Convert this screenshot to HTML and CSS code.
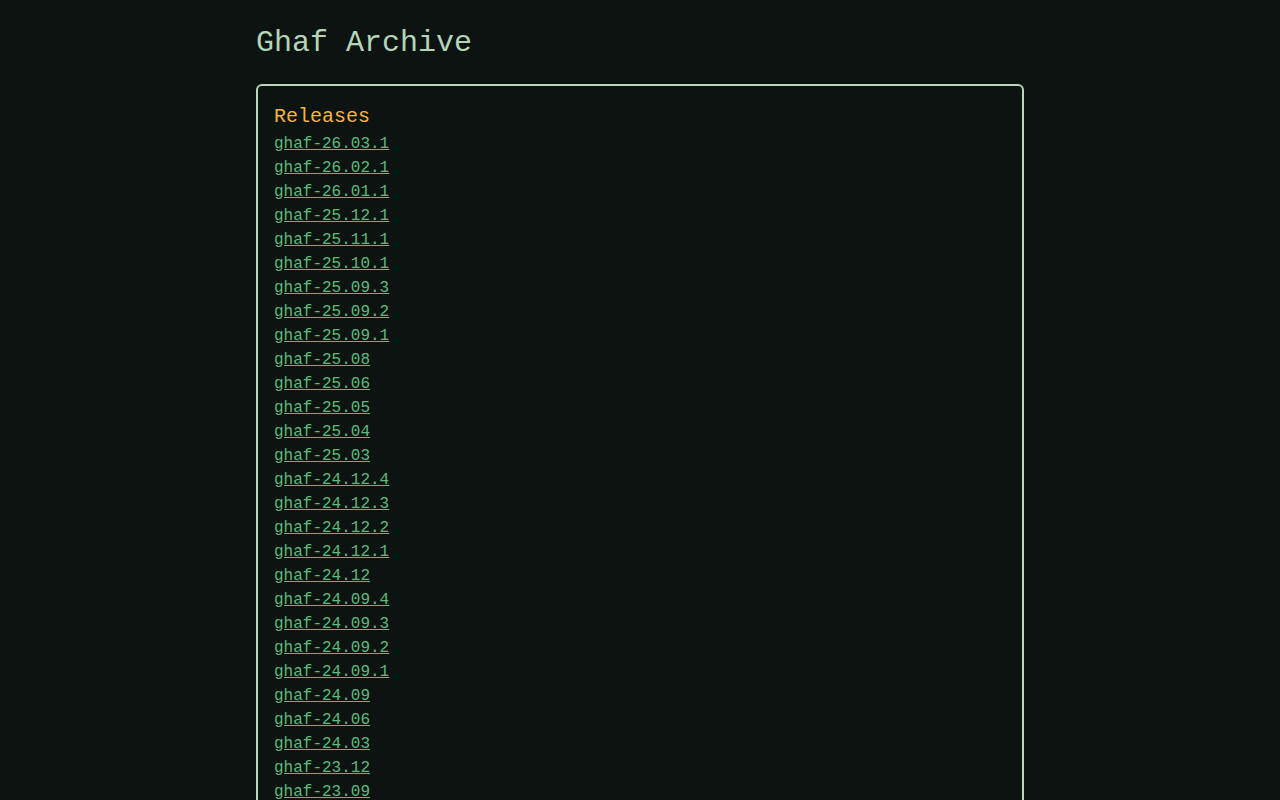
FILE: index.html
```html
<!DOCTYPE html>
<html lang="en">
<head>
<meta charset="UTF-8">
<meta name="viewport" content="width=device-width, initial-scale=1.0">
<title>Ghaf Archive</title>
<link rel="stylesheet" href="styles.css">
</head>
<body>
<div class="container">
    <h1>Ghaf Archive</h1>
    <div class="section">
        <h2>Releases</h2>
        <ul class="release-list">
            <li><a href="ghaf-26.03.1/">ghaf-26.03.1</a></li>
            <li><a href="ghaf-26.02.1/">ghaf-26.02.1</a></li>
            <li><a href="ghaf-26.01.1/">ghaf-26.01.1</a></li>
            <li><a href="ghaf-25.12.1/">ghaf-25.12.1</a></li>
            <li><a href="ghaf-25.11.1/">ghaf-25.11.1</a></li>
            <li><a href="ghaf-25.10.1/">ghaf-25.10.1</a></li>
            <li><a href="ghaf-25.09.3/">ghaf-25.09.3</a></li>
            <li><a href="ghaf-25.09.2/">ghaf-25.09.2</a></li>
            <li><a href="ghaf-25.09.1/">ghaf-25.09.1</a></li>
            <li><a href="ghaf-25.08/">ghaf-25.08</a></li>
            <li><a href="ghaf-25.06/">ghaf-25.06</a></li>
            <li><a href="ghaf-25.05/">ghaf-25.05</a></li>
            <li><a href="ghaf-25.04/">ghaf-25.04</a></li>
            <li><a href="ghaf-25.03/">ghaf-25.03</a></li>
            <li><a href="ghaf-24.12.4/">ghaf-24.12.4</a></li>
            <li><a href="ghaf-24.12.3/">ghaf-24.12.3</a></li>
            <li><a href="ghaf-24.12.2/">ghaf-24.12.2</a></li>
            <li><a href="ghaf-24.12.1/">ghaf-24.12.1</a></li>
            <li><a href="ghaf-24.12/">ghaf-24.12</a></li>
            <li><a href="ghaf-24.09.4/">ghaf-24.09.4</a></li>
            <li><a href="ghaf-24.09.3/">ghaf-24.09.3</a></li>
            <li><a href="ghaf-24.09.2/">ghaf-24.09.2</a></li>
            <li><a href="ghaf-24.09.1/">ghaf-24.09.1</a></li>
            <li><a href="ghaf-24.09/">ghaf-24.09</a></li>
            <li><a href="ghaf-24.06/">ghaf-24.06</a></li>
            <li><a href="ghaf-24.03/">ghaf-24.03</a></li>
            <li><a href="ghaf-23.12/">ghaf-23.12</a></li>
            <li><a href="ghaf-23.09/">ghaf-23.09</a></li>
            <li><a href="ghaf-23.06/">ghaf-23.06</a></li>
            <li><a href="ghaf-23.05/">ghaf-23.05</a></li>
        </ul>
    </div>
</div>
</body>
</html>
```

FILE: styles.css
```css
body {
    font-family: 'Liberation Mono', 'DejaVu Sans Mono', monospace;
    margin: 0;
    padding: 0;
    background-color: #0d1311;
    color: #b5d5b8;
}

.container {
    width: 768px;
    margin: 0 auto;
    padding-top: 21px;
}

h1 {
    font-size: 30px;
    font-weight: normal;
    line-height: 45px;
    margin: 0 0 18px;
    color: #b5d5b8;
}

.section {
    border: 2px solid #b5d9b8;
    border-radius: 6px;
    padding: 16px;
}

h2 {
    font-size: 20px;
    font-weight: normal;
    line-height: 30px;
    margin: 0;
    color: #f2b63e;
}

.release-list {
    list-style: none;
    margin: 0;
    padding: 0;
}

.release-list li {
    font-size: 16px;
    line-height: 24px;
}

.release-list a {
    color: #5cbb7b;
    text-decoration: underline;
}

.release-list a:hover {
    color: #7fd89a;
}
```
